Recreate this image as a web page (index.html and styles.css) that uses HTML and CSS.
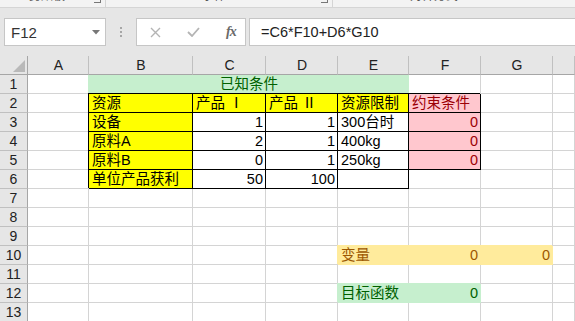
FILE: index.html
```html
<!DOCTYPE html>
<html lang="zh-CN">
<head>
    <meta charset="UTF-8">
    <title>线性规划</title>
    <link rel="stylesheet" href="styles.css">
</head>
<body>

    <div class="ribbon">
        <div class="group g1">
            <span class="glabel">剪贴板</span>
            <span class="launcher"></span>
        </div>
        <div class="group g2">
            <span class="glabel">字体</span>
            <span class="launcher"></span>
        </div>
        <div class="group g3">
            <span class="glabel">对齐方式</span>
        </div>
    </div>

    <div class="fbar">
        <div class="namebox">
            <span>F12</span>
            <svg class="drop" width="8" height="5" viewBox="0 0 8 5"><path d="M0 0h8L4 4.5z" fill="#777"/></svg>
        </div>
        <div class="grip"><i></i><i></i><i></i></div>
        <div class="fxbox">
            <svg class="btn-x" width="11" height="11" viewBox="0 0 11 11"><path d="M1 1l9 9M10 1l-9 9" stroke="#b4b4b4" stroke-width="1.4"/></svg>
            <svg class="btn-ok" width="13" height="10" viewBox="0 0 13 10"><path d="M1 5l4 4 7-8" fill="none" stroke="#b4b4b4" stroke-width="1.8"/></svg>
            <span class="fx">fx</span>
        </div>
        <div class="formula">=C6*F10+D6*G10</div>
    </div>

    <div class="sheet">
        <!-- header row -->
        <div class="c hd corner"><svg width="12" height="12" viewBox="0 0 12 12"><path d="M12 0v12H0z" fill="#b9b9b9"/></svg></div>
        <div class="c hd">A</div>
        <div class="c hd">B</div>
        <div class="c hd">C</div>
        <div class="c hd">D</div>
        <div class="c hd">E</div>
        <div class="c hd">F</div>
        <div class="c hd">G</div>
        <div class="c hd"></div>

        <!-- 1 -->
        <div class="c rh">1</div>
        <div class="c"></div>
        <div class="c good title">已知条件</div>
        <div class="c"></div>
        <div class="c"></div>
        <div class="c"></div>

        <!-- 2 -->
        <div class="c rh">2</div>
        <div class="c"></div>
        <div class="c yel bd">资源</div>
        <div class="c yel bd">产品 Ⅰ</div>
        <div class="c yel bd">产品 Ⅱ</div>
        <div class="c yel bd">资源限制</div>
        <div class="c bad bd">约束条件</div>
        <div class="c"></div>
        <div class="c"></div>

        <!-- 3 -->
        <div class="c rh">3</div>
        <div class="c"></div>
        <div class="c yel bd">设备</div>
        <div class="c bd num">1</div>
        <div class="c bd num">1</div>
        <div class="c bd">300台时</div>
        <div class="c bad bd num">0</div>
        <div class="c"></div>
        <div class="c"></div>

        <!-- 4 -->
        <div class="c rh">4</div>
        <div class="c"></div>
        <div class="c yel bd">原料A</div>
        <div class="c bd num">2</div>
        <div class="c bd num">1</div>
        <div class="c bd">400kg</div>
        <div class="c bad bd num">0</div>
        <div class="c"></div>
        <div class="c"></div>

        <!-- 5 -->
        <div class="c rh">5</div>
        <div class="c"></div>
        <div class="c yel bd">原料B</div>
        <div class="c bd num">0</div>
        <div class="c bd num">1</div>
        <div class="c bd">250kg</div>
        <div class="c bad bd num">0</div>
        <div class="c"></div>
        <div class="c"></div>

        <!-- 6 -->
        <div class="c rh">6</div>
        <div class="c"></div>
        <div class="c yel bd">单位产品获利</div>
        <div class="c bd num">50</div>
        <div class="c bd num">100</div>
        <div class="c bd"></div>
        <div class="c"></div>
        <div class="c"></div>
        <div class="c"></div>

        <!-- 7 - 9 -->
        <div class="c rh">7</div>
        <div class="c"></div><div class="c"></div><div class="c"></div><div class="c"></div>
        <div class="c"></div><div class="c"></div><div class="c"></div><div class="c"></div>
        <div class="c rh">8</div>
        <div class="c"></div><div class="c"></div><div class="c"></div><div class="c"></div>
        <div class="c"></div><div class="c"></div><div class="c"></div><div class="c"></div>
        <div class="c rh">9</div>
        <div class="c"></div><div class="c"></div><div class="c"></div><div class="c"></div>
        <div class="c"></div><div class="c"></div><div class="c"></div><div class="c"></div>

        <!-- 10 -->
        <div class="c rh">10</div>
        <div class="c"></div>
        <div class="c"></div>
        <div class="c"></div>
        <div class="c"></div>
        <div class="c neutral">变量</div>
        <div class="c neutral num">0</div>
        <div class="c neutral num">0</div>
        <div class="c"></div>

        <!-- 11 -->
        <div class="c rh">11</div>
        <div class="c"></div><div class="c"></div><div class="c"></div><div class="c"></div>
        <div class="c"></div><div class="c"></div><div class="c"></div><div class="c"></div>

        <!-- 12 -->
        <div class="c rh">12</div>
        <div class="c"></div>
        <div class="c"></div>
        <div class="c"></div>
        <div class="c"></div>
        <div class="c good">目标函数</div>
        <div class="c good num">0</div>
        <div class="c"></div>
        <div class="c"></div>

        <!-- 13 -->
        <div class="c rh">13</div>
        <div class="c"></div><div class="c"></div><div class="c"></div><div class="c"></div>
        <div class="c"></div><div class="c"></div><div class="c"></div><div class="c"></div>
    </div>

</body>
</html>
```

FILE: styles.css
```css
body {
    margin: 0;
    width: 575px;
    height: 321px;
    overflow: hidden;
    background-color: #ffffff;
    font-family: "Liberation Sans", "Noto Sans CJK SC", sans-serif;
    color: #000000;
}

/* ribbon bottom edge, mostly cut off */
.ribbon {
    display: flex;
    height: 7px;
    background-color: #f3f3f3;
    border-bottom: 1px solid #d5d5d5;
    overflow: hidden;
}

.group {
    display: flex;
    align-items: flex-start;
    box-sizing: border-box;
    height: 7px;
}

.g1 {
    width: 106px;
    padding-left: 29px;
    border-right: 1px solid #d5d5d5;
}

.g2 {
    width: 227px;
    padding-left: 96px;
    border-right: 1px solid #d5d5d5;
}

.g3 {
    padding-left: 77px;
}

.glabel {
    font-size: 12px;
    line-height: 14px;
    margin-top: -11px;
    color: #555555;
}

.launcher {
    margin-left: auto;
    margin-right: 4px;
    margin-top: -4px;
    width: 6px;
    height: 6px;
    border-right: 1px solid #777777;
    border-bottom: 1px solid #777777;
}

/* formula bar */
.fbar {
    display: flex;
    align-items: flex-start;
    height: 48px;
    box-sizing: border-box;
    padding: 10px 0 0 4px;
    background-color: #e6e6e6;
}

.namebox {
    display: flex;
    align-items: center;
    box-sizing: border-box;
    width: 102px;
    height: 28px;
    padding: 0 5px 0 6px;
    background-color: #ffffff;
    border: 1px solid #c6c6c6;
    font-size: 15px;
    color: #333333;
}

.drop {
    margin-left: auto;
}

.grip {
    display: flex;
    flex-direction: column;
    align-items: center;
    gap: 2px;
    width: 30px;
    padding-top: 9px;
}

.grip i {
    display: block;
    width: 2px;
    height: 2px;
    background-color: #a6a6a6;
}

.fxbox {
    display: flex;
    align-items: center;
    box-sizing: border-box;
    width: 110px;
    height: 28px;
    padding-left: 13px;
    background-color: #ffffff;
    border: 1px solid #c6c6c6;
}

.btn-ok {
    margin-left: 26px;
}

.fx {
    margin-left: 26px;
    font-family: "Liberation Serif", serif;
    font-style: italic;
    font-weight: bold;
    font-size: 14px;
    color: #6a6a6a;
    letter-spacing: -1px;
}

.formula {
    flex: 1;
    box-sizing: border-box;
    height: 28px;
    margin-left: 3px;
    padding-left: 11px;
    background-color: #ffffff;
    border: 1px solid #c6c6c6;
    border-right: none;
    font-size: 14.5px;
    line-height: 26px;
    color: #222222;
}

/* worksheet */
.sheet {
    display: grid;
    grid-template-columns: 28px 61px 104px 73px 72px 71px 72px 72px 1fr;
    grid-auto-rows: 19px;
}

.c {
    display: flex;
    align-items: flex-end;
    box-sizing: border-box;
    padding: 0 2px 0 3px;
    background-color: #ffffff;
    border-right: 1px solid #d4d4d4;
    border-bottom: 1px solid #d4d4d4;
    font-size: 14.5px;
    line-height: 18px;
    white-space: nowrap;
    overflow: hidden;
}

.num {
    justify-content: flex-end;
}

.hd {
    justify-content: center;
    align-items: center;
    background-color: #e6e6e6;
    border-right-color: #c0c0c0;
    border-bottom-color: #a6a6a6;
    font-size: 14px;
    color: #222222;
}

.corner {
    justify-content: flex-end;
    align-items: flex-end;
    padding: 0 2px 2px 0;
    border-right-color: #a6a6a6;
}

.rh {
    justify-content: center;
    align-items: center;
    padding: 0;
    background-color: #e6e6e6;
    border-right-color: #a6a6a6;
    border-bottom-color: #c0c0c0;
    font-size: 14px;
    color: #222222;
}

.good {
    background-color: #c6efce;
    border-color: #c6efce;
    box-shadow: -1px -1px 0 0 #c6efce;
    color: #006100;
}

.title {
    grid-column: span 4;
    justify-content: center;
    box-shadow: -1px 0 0 0 #c6efce;
}

.neutral {
    background-color: #ffeb9c;
    border-color: #ffeb9c;
    box-shadow: -1px -1px 0 0 #ffeb9c;
    color: #9c5700;
}

.bad {
    background-color: #ffc7ce;
    color: #9c0006;
}

.yel {
    background-color: #ffff00;
}

/* thin black cell border */
.bd {
    border-right-color: #000000;
    border-bottom-color: #000000;
    box-shadow: -1px -1px 0 0 #000000;
}
```
